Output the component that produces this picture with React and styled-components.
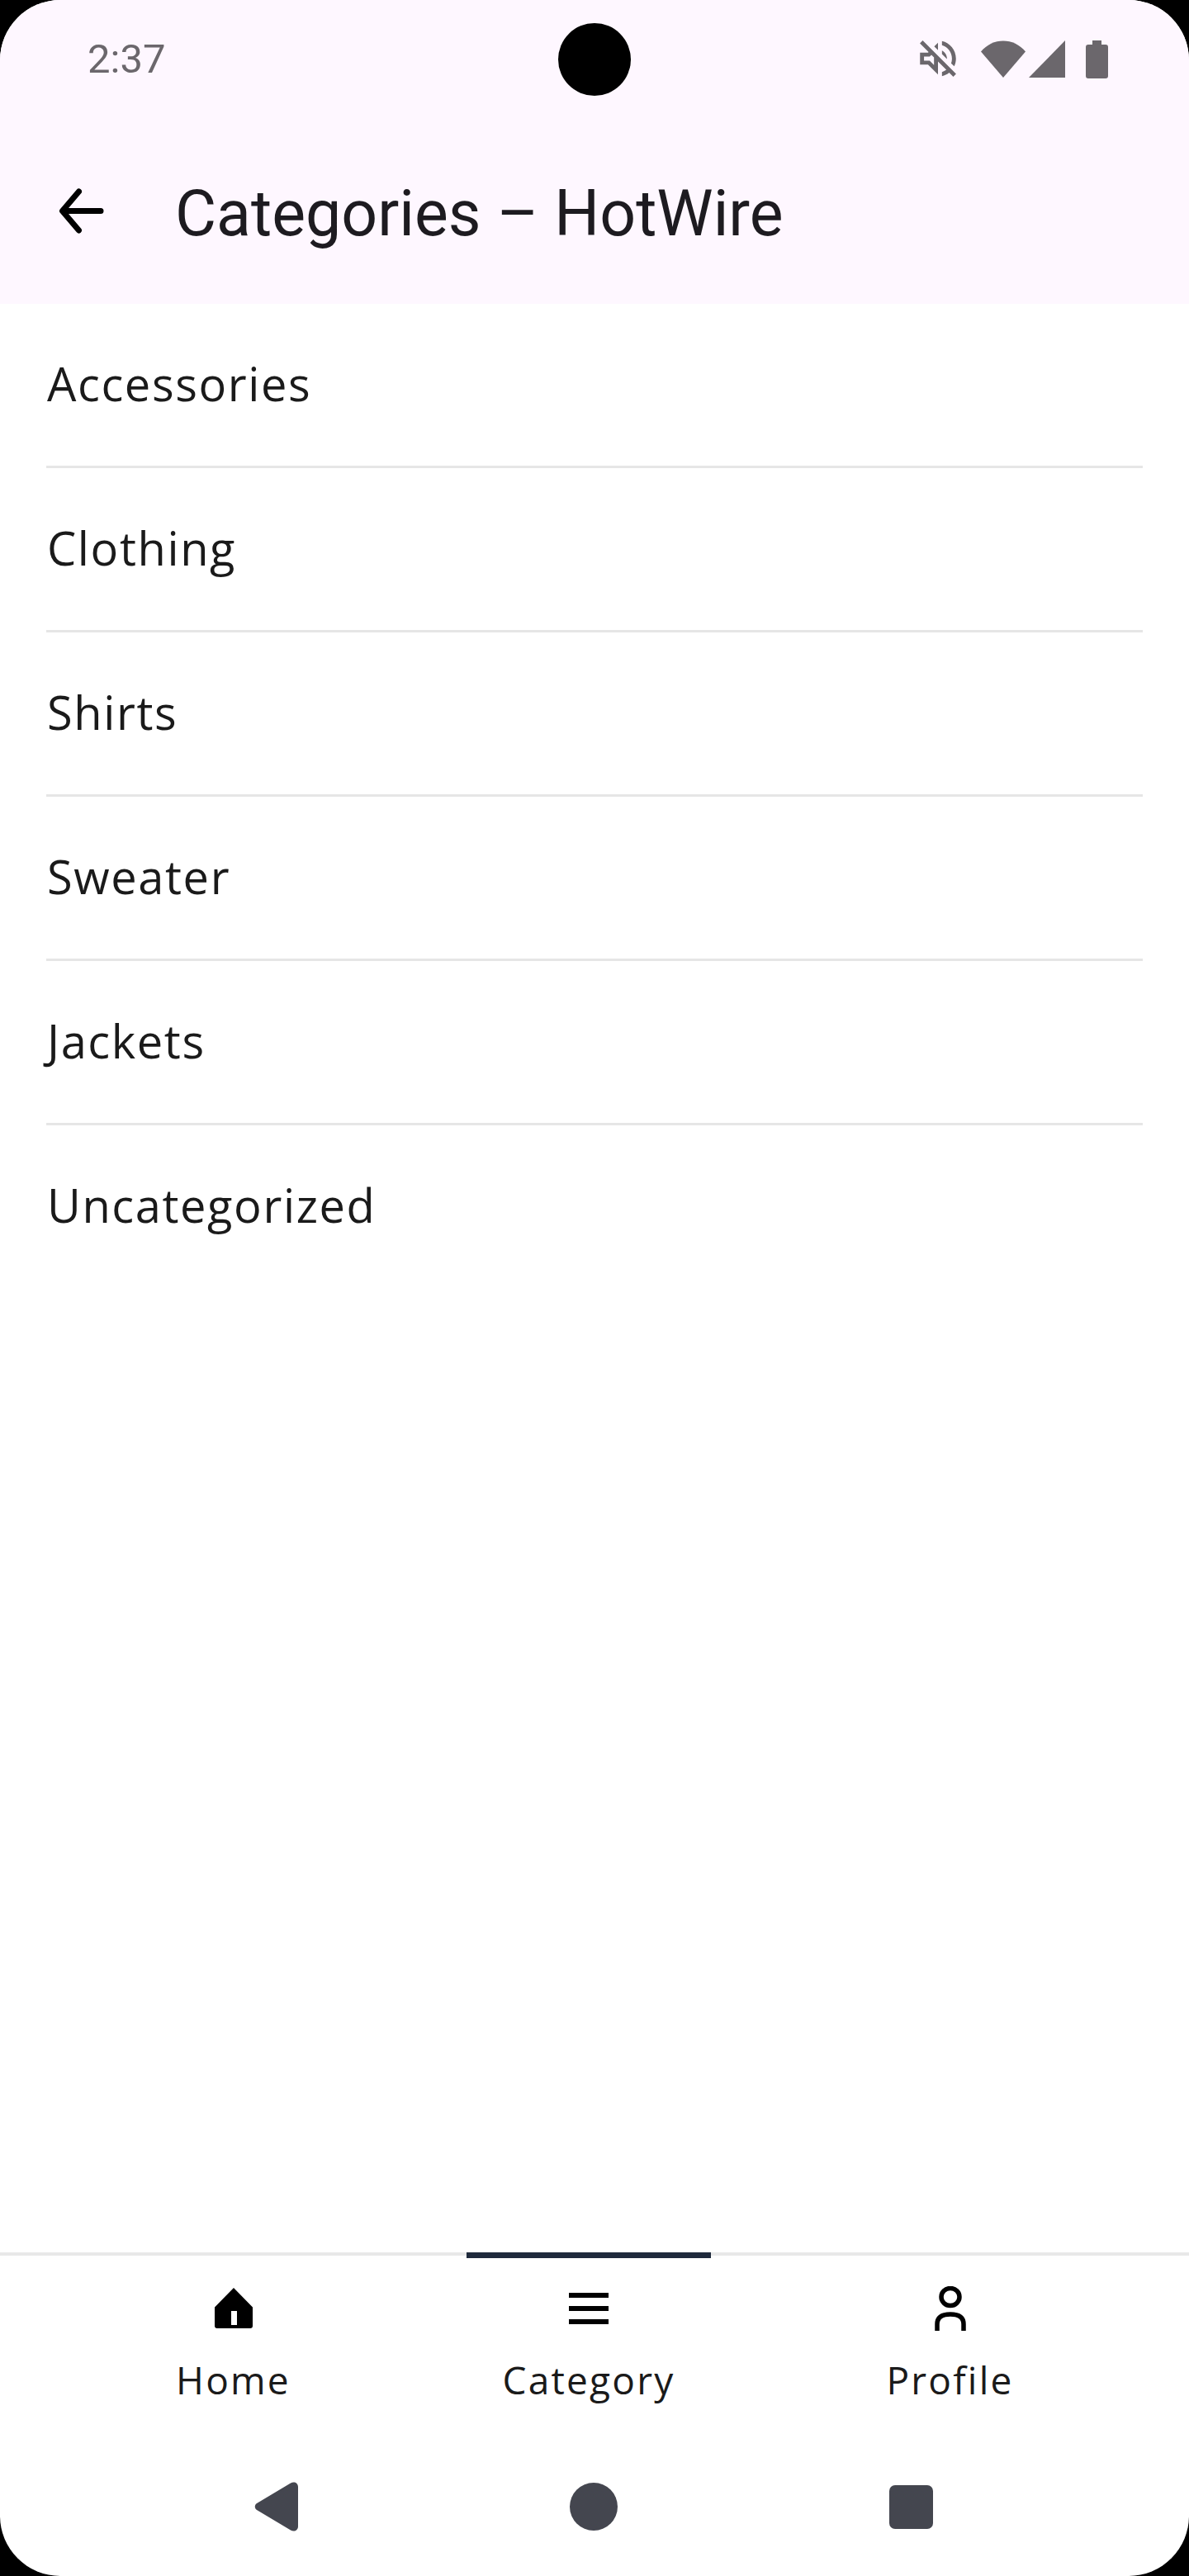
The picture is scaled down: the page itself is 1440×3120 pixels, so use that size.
import React from "react";
import styled, { createGlobalStyle } from "styled-components";

const GlobalStyle = createGlobalStyle`
	html, body {
		margin: 0;
		padding: 0;
		background: #000;
	}
`;

const Frame = styled.div`
	position: relative;
	display: flex;
	flex-direction: column;
	width: 1440px;
	height: 3120px;
	background: #fff;
	border-radius: 73px;
	overflow: hidden;
`;

const Header = styled.header`
	background: #fef7ff;
	height: 368px;
	display: flex;
	flex-direction: column;
`;

const StatusBar = styled.div`
	display: flex;
	align-items: flex-start;
	justify-content: space-between;
	height: 150px;
	padding: 43px 98px 0 106px;
	box-sizing: border-box;
`;

const Time = styled.div`
	font-family: Roboto, sans-serif;
	font-size: 49px;
	line-height: 58px;
	color: #6b676c;
`;

const Camera = styled.div`
	position: absolute;
	left: 676px;
	top: 28px;
	width: 88px;
	height: 88px;
	border-radius: 50%;
	background: #000;
`;

const StatusIcons = styled.div`
	display: flex;
	align-items: flex-start;
	margin-top: 6px;
	fill: #6b676c;

	svg {
		display: block;
	}
`;

const AppBar = styled.div`
	display: flex;
	align-items: center;
	padding-left: 71px;
	flex: 1;
`;

const BackButton = styled.div`
	display: flex;
	margin-bottom: 6px;
`;

const Title = styled.h1`
	margin: 0 0 0 85px;
	font-family: Roboto, sans-serif;
	font-weight: 400;
	font-size: 77px;
	line-height: 90px;
	color: #1d1b20;
`;

const List = styled.main`
	flex: 1;
	padding: 0 56px;
`;

const Row = styled.div`
	display: flex;
	align-items: center;
	height: 192px;
	padding: 0 0 4px 1px;
	border-bottom: 3px solid ${props => (props.last ? "transparent" : "#e6e6e6")};
	font-family: "Open Sans", sans-serif;
	font-size: 56px;
	letter-spacing: 1.6px;
	color: #1a1a1a;
`;

const TabBar = styled.nav`
	display: grid;
	grid-template-columns: 565px 296px 1fr;
	height: 224px;
	box-sizing: border-box;
	border-top: 4px solid #e8e8e8;
`;

const Tab = styled.div`
	display: flex;
	flex-direction: column;
	align-items: center;
	margin-top: -4px;
	padding-top: ${props => (props.active ? "33px" : "40px")};
	border-top: ${props => (props.active ? "7px solid #1f2a3c" : "none")};
`;

const TabIcon = styled.div`
	display: flex;
	align-items: center;
	justify-content: center;
	height: 56px;
`;

const TabLabel = styled.div`
	margin-top: 28px;
	font-family: "Open Sans", sans-serif;
	font-size: 46px;
	line-height: 60px;
	letter-spacing: 2.2px;
	color: #1a1a1a;
`;

const NavBar = styled.div`
	display: grid;
	grid-template-columns: repeat(3, 384px);
	justify-content: center;
	align-items: center;
	height: 168px;
	padding-right: 2px;
	box-sizing: border-box;
	fill: #44464f;
`;

const NavButton = styled.div`
	display: flex;
	justify-content: center;
`;

const categories = ["Accessories", "Clothing", "Shirts", "Sweater", "Jackets", "Uncategorized"];

const MuteIcon = () => (
	<svg width="44" height="44" viewBox="2.9 2.9 18.2 18.2" style={{ marginRight: 30 }}>
		<path d="M4.34 2.93L2.93 4.34 7.29 8.7 7 9H3v6h4l5 5v-6.59l4.18 4.18c-.65.49-1.38.88-2.18 1.11v2.06c1.34-.3 2.57-.92 3.61-1.75l2.05 2.05 1.41-1.41L4.34 2.93zM10 15.17L7.83 13H5v-2h2.83l.88-.88L10 11.41v3.76zM19 12c0 .82-.15 1.61-.41 2.34l1.53 1.53c.56-1.17.88-2.48.88-3.87 0-4.28-2.99-7.86-7-8.77v2.06c2.89.86 5 3.54 5 6.71zm-7-8l-1.88 1.88L12 7.76zm4.5 8c0-1.77-1.02-3.29-2.5-4.03v1.79l2.48 2.48c.01-.08.02-.16.02-.24z" />
	</svg>
);

const WifiIcon = () => (
	<svg width="54" height="45" viewBox="0 0 54 45" style={{ marginRight: 4 }}>
		<path d="M0 13.5C14 -4 40 -4 54 13.5L27 45Z" />
	</svg>
);

const SignalIcon = () => (
	<svg width="44" height="45" viewBox="0 0 44 45" style={{ marginRight: 25 }}>
		<path d="M0 45L44 0V45Z" />
	</svg>
);

const BatteryIcon = () => (
	<svg width="27" height="46" viewBox="0 0 27 46">
		<path d="M8 0H19V5H24A3 3 0 0 1 27 8V43A3 3 0 0 1 24 46H3A3 3 0 0 1 0 43V8A3 3 0 0 1 3 5H8Z" />
	</svg>
);

const BackIcon = () => (
	<svg width="56" height="56" viewBox="0 0 56 56" fill="none" stroke="#000" strokeWidth="7" strokeLinecap="round" strokeLinejoin="round">
		<path d="M51 27.500H5M24.500 4L4.500 27.500L24.500 51" />
	</svg>
);

const HomeIcon = () => (
	<svg width="48" height="50" viewBox="0 0 48 50">
		<path
			fillRule="evenodd"
			d="M24 0L47 23.500V46A3 3 0 0 1 44 49H4A3 3 0 0 1 1 46V23.500ZM21 28V45H28V28Z"
		/>
	</svg>
);

const MenuIcon = () => (
	<svg width="48" height="38" viewBox="0 0 48 38">
		<path d="M0 0H48V6H0ZM0 16H48V22H0ZM0 32H48V38H0Z" />
	</svg>
);

const PersonIcon = () => (
	<svg width="38" height="54" viewBox="0 0 38 54" fill="none" stroke="#000" strokeWidth="5.500">
		<ellipse cx="19" cy="13" rx="11" ry="10.500" />
		<path d="M3 54V46C3 37 10 34 19 34S35 37 35 46V54" />
	</svg>
);

const BackNav = () => (
	<svg width="54" height="60" viewBox="0 0 54 60">
		<path d="M44 1.500C48 -1 53 1 53 6V54C53 59 48 61 44 58.500L3 34C0 32 0 28 3 26Z" />
	</svg>
);

const HomeNav = () => (
	<svg width="58" height="58" viewBox="0 0 58 58">
		<circle cx="29" cy="29" r="29" />
	</svg>
);

const RecentNav = () => (
	<svg width="53" height="53" viewBox="0 0 53 53">
		<rect width="53" height="53" rx="7" />
	</svg>
);

const App = () => {
	return (
		<Frame>
			<GlobalStyle />
			<Header>
				<StatusBar>
					<Time>2:37</Time>
					<StatusIcons>
						<MuteIcon />
						<WifiIcon />
						<SignalIcon />
						<BatteryIcon />
					</StatusIcons>
				</StatusBar>
				<Camera />
				<AppBar>
					<BackButton>
						<BackIcon />
					</BackButton>
					<Title>Categories – HotWire</Title>
				</AppBar>
			</Header>
			<List>
				{categories.map((name, i) => (
					<Row key={name} last={i === categories.length - 1}>
						{name}
					</Row>
				))}
			</List>
			<TabBar>
				<Tab>
					<TabIcon>
						<HomeIcon />
					</TabIcon>
					<TabLabel>Home</TabLabel>
				</Tab>
				<Tab active>
					<TabIcon>
						<MenuIcon />
					</TabIcon>
					<TabLabel>Category</TabLabel>
				</Tab>
				<Tab>
					<TabIcon>
						<PersonIcon />
					</TabIcon>
					<TabLabel>Profile</TabLabel>
				</Tab>
			</TabBar>
			<NavBar>
				<NavButton>
					<BackNav />
				</NavButton>
				<NavButton>
					<HomeNav />
				</NavButton>
				<NavButton>
					<RecentNav />
				</NavButton>
			</NavBar>
		</Frame>
	);
};

export default App;
